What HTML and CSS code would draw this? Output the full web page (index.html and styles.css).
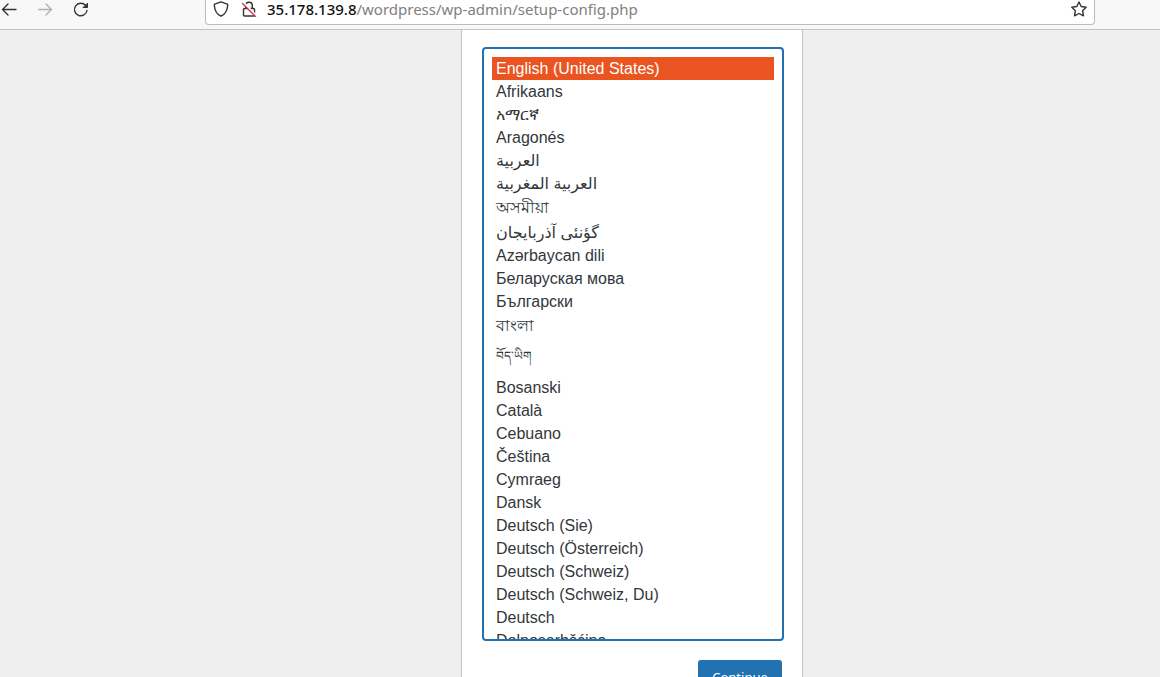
FILE: index.html
```html
<!DOCTYPE html>
<html lang="en">
<head>
<meta charset="utf-8">
<title>WordPress Setup</title>
<link rel="stylesheet" href="styles.css">
</head>
<body>
<header class="toolbar">
  <nav class="nav">
    <button class="icon-button" type="button" aria-label="Back"><svg width="16" height="16" viewBox="0 0 16 16"><path d="M15 7.500H1.500M7 2L1.500 7.500L7 13"/></svg></button>
    <button class="icon-button" type="button" aria-label="Forward" disabled><svg width="16" height="16" viewBox="0 0 16 16"><path d="M1.500 7.500H14.500M9 2L14.500 7.500L9 13"/></svg></button>
    <button class="icon-button" type="button" aria-label="Reload"><svg width="16" height="16" viewBox="0 0 16 16"><path d="M12.500 3.300A6.300 6.300 0 1 0 14 8.500"/><path class="solid" d="M14.500 1.500V5.500H10.500Z"/></svg></button>
  </nav>
  <div class="address">
    <button class="icon-button" type="button" aria-label="Tracking protection"><svg width="16" height="16" viewBox="0 0 16 16"><path d="M8 .8L14.300 3.100Q14.800 3.300 14.700 4Q14.300 12.300 8 15.200Q1.700 12.300 1.300 4Q1.200 3.300 1.700 3.100Z"/></svg></button>
    <button class="icon-button" type="button" aria-label="Connection not secure"><svg width="16" height="16" viewBox="0 0 16 16"><path d="M4.700 7.500V4.500A3.300 3.300 0 0 1 11.300 4.500V7.500M3.500 7.500H12.500Q13.500 7.500 13.500 8.500V14Q13.500 15 12.500 15H3.500Q2.500 15 2.500 14V8.500Q2.500 7.500 3.500 7.500Z"/><path class="gap" d="M2.500 1.500L15 14.500"/><path class="slash" d="M1.500 2.500L14.500 15.500"/></svg></button>
    <div class="url"><span class="host">35.178.139.8</span>/wordpress/wp-admin/setup-config.php</div>
    <button class="icon-button" type="button" aria-label="Bookmark this page"><svg width="16" height="16" viewBox="0 0 16 16"><path d="M8 1L10.200 5.500L15.200 6.200L11.600 9.700L12.500 14.800L8 12.500L3.500 14.800L4.400 9.700L.8 6.200L5.800 5.500Z"/></svg></button>
  </div>
</header>
<main class="page">
  <form class="panel">
    <select class="languages" name="language" size="25" aria-label="Select a default language">
      <option selected>English (United States)</option>
      <option lang="af">Afrikaans</option>
      <option lang="am">አማርኛ</option>
      <option lang="an">Aragonés</option>
      <option class="arabic" lang="ar">العربية</option>
      <option class="arabic" lang="ary">العربية المغربية</option>
      <option class="bengali" lang="as">অসমীয়া</option>
      <option class="arabic" lang="azb">گؤنئی آذربایجان</option>
      <option lang="az">Azərbaycan dili</option>
      <option lang="be">Беларуская мова</option>
      <option lang="bg">Български</option>
      <option class="bengali" lang="bn">বাংলা</option>
      <option class="tibetan" lang="bo">བོད་ཡིག</option>
      <option lang="bs">Bosanski</option>
      <option lang="ca">Català</option>
      <option lang="ceb">Cebuano</option>
      <option lang="cs">Čeština</option>
      <option lang="cy">Cymraeg</option>
      <option lang="da">Dansk</option>
      <option lang="de">Deutsch (Sie)</option>
      <option lang="de">Deutsch (Österreich)</option>
      <option lang="de">Deutsch (Schweiz)</option>
      <option lang="de">Deutsch (Schweiz, Du)</option>
      <option lang="de">Deutsch</option>
      <option lang="dsb">Dolnoserbšćina</option>
    </select>
    <div class="actions"><button class="continue" type="submit">Continue</button></div>
  </form>
</main>
</body>
</html>
```
FILE: styles.css
```css
* { box-sizing: border-box; }

body {
  margin: 0;
  height: 100vh;
  display: flex;
  flex-direction: column;
  overflow: hidden;
  background: #efefef;
  font-family: "Liberation Sans", Arial, sans-serif;
}

.toolbar {
  flex: none;
  display: flex;
  height: 30px;
  padding-right: 65px;
  background: #f8f8f8;
  border-bottom: 1px solid #c3c3c3;
}

.nav {
  display: flex;
  gap: 20px;
  width: 205px;
  padding: 2px 0 0 1px;
}

.icon-button {
  flex: none;
  width: 16px;
  height: 16px;
  padding: 0;
  border: 0;
  background: none;
  color: #333;
}

.icon-button:disabled { color: #b0b0b0; }

.icon-button svg {
  display: block;
  fill: none;
  stroke: currentColor;
  stroke-width: 1.4;
  stroke-linecap: round;
  stroke-linejoin: round;
}

.icon-button .solid { fill: currentColor; stroke-width: 1; }
.icon-button .gap { stroke: #fff; stroke-width: 2; }
.icon-button .slash { stroke: #e22850; }

.address {
  flex: 1;
  display: flex;
  gap: 12px;
  height: 25px;
  padding: 1px 7px 0;
  background: #fff;
  border: 1px solid #bcbcbc;
  border-top: 0;
  border-radius: 0 0 4px 4px;
}

.url {
  flex: 1;
  margin-left: -2px;
  color: #808080;
  font: 15px/16px "Noto Sans", sans-serif;
  white-space: nowrap;
}

.host { color: #111; font-weight: 500; }

.page {
  flex: 1;
  min-height: 0;
  display: grid;
  grid-template-columns: 461fr 342px 357fr;
}

.panel {
  grid-column: 2;
  padding: 17px 18px 0 20px;
  background: #fff;
  border: 1px solid #c3c4c7;
  border-width: 0 1px;
}

.languages {
  display: block;
  width: 100%;
  height: 594px;
  padding: 8px;
  border: 2px solid #2271b1;
  border-radius: 4px;
  outline: 0;
  background: #fff;
  color: #32373c;
  font: 16px "Liberation Sans", Arial, "DejaVu Sans", sans-serif;
  overflow: hidden;
  scrollbar-width: none;
}

.languages option {
  height: 23px;
  min-height: 23px;
  padding: 3px 4px 0;
  direction: ltr;
  text-align: left;
}

.languages option:checked {
  background: #e95420 linear-gradient(#e95420, #e95420);
  -webkit-text-fill-color: #fff;
}

.languages .arabic { padding-top: 2px; }
.languages .bengali { height: 26px; padding-top: 0; }
.languages .tibetan { height: 37px; font-size: 12px; }

.actions {
  display: flex;
  justify-content: flex-end;
  padding: 19px 2px 0 0;
}

.continue {
  width: 84px;
  height: 34px;
  border: 0;
  border-radius: 3px;
  background: #2271b1;
  color: #fff;
  font: 13px "Noto Sans", sans-serif;
}
```
